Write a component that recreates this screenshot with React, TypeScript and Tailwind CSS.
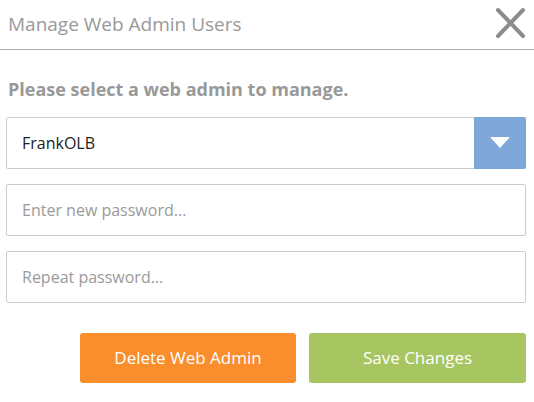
import { useState } from "react";

export default function App() {
  const [admin, setAdmin] = useState("FrankOLB");

  return (
    <div className="w-[534px] h-[402px] bg-white overflow-hidden" style={{ fontFamily: "'Open Sans', 'Noto Sans', sans-serif" }}>
      {/* Header */}
      <div className="h-[50px] flex items-center justify-between pl-2 pr-2 border-b border-[#b0b0b0]">
        <h1 className="text-[19px] text-[#999] font-normal">Manage Web Admin Users</h1>
        <button type="button" className="w-[32px] h-[32px] flex items-center justify-center -mt-1">
          <svg viewBox="0 0 32 32" className="w-[32px] h-[32px]">
            <path d="M4 3 L29 29 M29 3 L4 29" stroke="#8c8c8c" strokeWidth="4" strokeLinecap="round" />
          </svg>
        </button>
      </div>

      {/* Body */}
      <div className="pl-[6px] pr-[8px] pt-[26px]">
        <p className="pl-[2px] text-[18px] font-bold text-[#999] leading-[26px]">Please select a web admin to manage.</p>

        <div className="mt-[15px] h-[52px] flex border border-[#ccc] rounded-[2px]">
          <div className="flex-1 flex items-center pl-[15px] text-[16px] text-[#222]">{admin}</div>
          <button type="button" onClick={() => setAdmin(admin)} className="w-[52px] -my-px -mr-px bg-[#7ea6d8] flex items-center justify-center rounded-r-[2px]">
            <svg viewBox="0 0 20 12" className="w-[20px] h-[12px]">
              <path d="M0 0 H20 L10 11 Z" fill="#fff" />
            </svg>
          </button>
        </div>

        <input
          type="password"
          placeholder="Enter new password..."
          className="mt-[15px] w-full h-[52px] border border-[#ccc] rounded-[2px] pl-[15px] text-[16px] outline-none placeholder:text-[#9a9a9a]"
        />
        <input
          type="password"
          placeholder="Repeat password..."
          className="mt-[15px] w-full h-[52px] border border-[#ccc] rounded-[2px] pl-[15px] text-[16px] outline-none placeholder:text-[#9a9a9a]"
        />

        <div className="mt-[30px] flex justify-end gap-[13px]">
          <button type="button" className="w-[216px] h-[50px] rounded-[3px] bg-[#fa8d2c] text-white text-[17px]">
            Delete Web Admin
          </button>
          <button type="button" className="w-[217px] h-[50px] rounded-[3px] bg-[#a7c662] text-white text-[17px]">
            Save Changes
          </button>
        </div>
      </div>
    </div>
  );
}
